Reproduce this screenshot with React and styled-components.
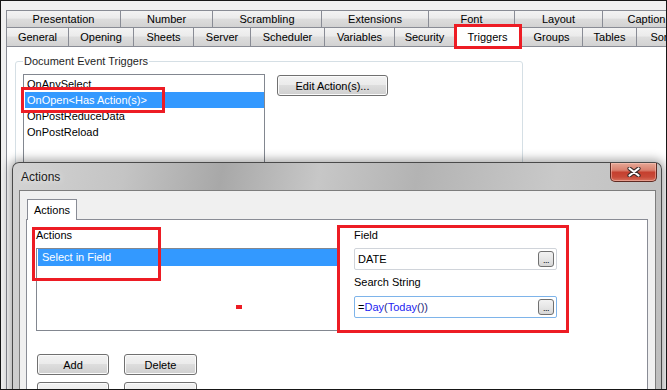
import React from "react";
import styled, { createGlobalStyle, css } from "styled-components";

const GlobalStyle = createGlobalStyle`
  html, body { margin: 0; padding: 0; background: #ffffff; }
  body {
    font-family: "Liberation Sans", Arial, sans-serif;
    font-size: 11px;
    color: #000;
  }
  * { box-sizing: border-box; }
`;

const Frame = styled.div`
  width: 667px;
  height: 390px;
  border: 1px solid #161616;
  overflow: hidden;
`;

const Canvas = styled.div`
  position: relative;
  width: 665px;
  height: 388px;
  background: #f0f0f0;
  padding-top: 9px;
  overflow: hidden;
`;

const TabStrip = styled.div`
  padding-left: 5px;
`;

const TabRow = styled.div`
  display: flex;
  align-items: flex-start;
  height: 18px;
`;

const Tab = styled.div`
  flex: 0 0 ${({ $w }) => $w}px;
  height: 18px;
  border: 1px solid #898c95;
  border-left-width: 0;
  ${({ $lower }) =>
    $lower &&
    css`
      border-top-width: 0;
      border-bottom-width: 0;
    `}
  &:first-child { border-left-width: 1px; }
  background: linear-gradient(#f3f3f3, #ebebeb 45%, #dddddd 50%, #d2d2d2);
  display: flex;
  align-items: center;
  justify-content: center;
  white-space: nowrap;
  overflow: hidden;
  position: relative;
  ${({ $active }) =>
    $active &&
    css`
      background: #ffffff;
      height: 21px;
      margin-top: -2px;
      border-top-width: 1px;
      border-left-width: 1px;
      margin-left: -1px;
      flex-basis: ${({ $w }) => $w + 1}px;
      z-index: 2;
    `}
`;

const Panel = styled.div`
  margin-left: 5px;
  width: 700px;
  height: 360px;
  background: #ffffff;
  border: 1px solid #898c95;
  padding-top: 8px;
`;

const GroupBox = styled.fieldset`
  margin: 0 0 0 8px;
  width: 508px;
  height: 300px;
  border: 1px solid #d5dfe5;
  border-radius: 3px;
  padding: 0 0 0 7px;
`;

const Legend = styled.legend`
  padding: 0 1px;
  line-height: 13px;
  color: #1e1e1e;
`;

const GroupBody = styled.div`
  display: flex;
  align-items: flex-start;
  padding-top: 6px;
`;

const ListBox = styled.div`
  flex-shrink: 0;
  width: ${({ $w }) => $w}px;
  height: ${({ $h }) => $h}px;
  margin-top: ${({ $mt }) => $mt || 0}px;
  border: 1px solid #828790;
  padding: ${({ $pt }) => $pt}px 0 0 1px;
  background: #fff;
`;

const ListItem = styled.div`
  height: ${({ $h }) => $h || 16}px;
  line-height: ${({ $h }) => $h || 16}px;
  padding-left: ${({ $pl }) => $pl || 2}px;
  white-space: nowrap;
  ${({ $selected }) =>
    $selected &&
    css`
      background: #3399ff;
      color: #ffffff;
    `}
`;

const Button = styled.div`
  width: ${({ $w }) => $w}px;
  height: 21px;
  border: 1px solid #707070;
  border-radius: 3px;
  background: linear-gradient(#f2f2f2, #ebebeb 45%, #dddddd 50%, #cfcfcf);
  box-shadow: inset 0 0 0 1px #fbfbfb;
  display: flex;
  align-items: center;
  justify-content: center;
  color: ${({ $disabled }) => ($disabled ? "#8d8d8d" : "#000")};
  flex: 0 0 auto;
`;

const EditButton = styled(Button)`
  margin: 1px 0 0 12px;
`;

const Dialog = styled.div`
  position: absolute;
  left: 11px;
  top: 161px;
  width: 650px;
  height: 300px;
  border: 1px solid #4a4a4a;
  border-bottom: none;
  border-radius: 7px 7px 0 0;
  background: linear-gradient(
    100deg,
    #d3d3d3 0%,
    #c4c4c4 16%,
    #a8a8a8 30%,
    #c7c7c7 44%,
    #b3b3b3 58%,
    #c9c9c9 78%,
    #bdbdbd 100%
  );
  box-shadow: 0 0 10px 3px rgba(0, 0, 0, 0.32);
  padding: 0 5px 0 6px;
  display: flex;
  flex-direction: column;
  z-index: 3;
`;

const TitleBar = styled.div`
  flex-shrink: 0;
  height: 27px;
  margin: 0 -5px 0 -6px;
  padding: 0 4px 0 8px;
  display: flex;
  align-items: flex-start;
`;

const Title = styled.div`
  padding-top: 7px;
  line-height: 14px;
  font-size: 12px;
  color: #1a1a1a;
  text-shadow: 0 0 6px rgba(255, 255, 255, 0.9);
`;

const CloseButton = styled.div`
  margin-left: auto;
  width: 47px;
  height: 19px;
  border: 1px solid #5e2a22;
  border-top: none;
  border-radius: 0 0 5px 5px;
  background: linear-gradient(#e6a896 0%, #d9806e 40%, #c5402f 52%, #c84a38 78%, #d8735f 100%);
  box-shadow: inset 0 0 0 1px rgba(255, 210, 200, 0.45);
  display: flex;
  align-items: center;
  justify-content: center;
`;

const Client = styled.div`
  flex: 1;
  border: 1px solid #7d7d7d;
  background: #f0f0f0;
  padding: 8px 7px 0 6px;
  display: flex;
  flex-direction: column;
`;

const PageTab = styled.div`
  flex-shrink: 0;
  width: 50px;
  height: 21px;
  margin: 0 0 -1px 1px;
  border: 1px solid #898c95;
  border-bottom: none;
  background: #ffffff;
  display: flex;
  align-items: center;
  justify-content: center;
  position: relative;
  z-index: 1;
`;

const PagePanel = styled.div`
  flex: 1;
  border: 1px solid #898c95;
  background: #ffffff;
  padding: 9px 0 0 9px;
  display: grid;
  grid-template-columns: 302px 203px;
  column-gap: 16px;
  align-items: start;
`;

const Column = styled.div`
  display: flex;
  flex-direction: column;
`;

const Label = styled.div`
  line-height: 13px;
  margin-top: ${({ $mt }) => $mt || 0}px;
`;

const ButtonRow = styled.div`
  display: flex;
  gap: 15px;
  margin: ${({ $mt }) => $mt}px 0 0 1px;
`;

const TextBox = styled.div`
  height: 22px;
  margin-top: ${({ $mt }) => $mt}px;
  border: 1px solid ${({ $focus }) => ($focus ? "#7eb4ea" : "#d0d4da")};
  border-radius: 2px;
  display: flex;
  align-items: center;
  padding: 0 2px 0 3px;
  background: #fff;
`;

const TextValue = styled.div`
  flex: 1;
  white-space: nowrap;
`;

const Fn = styled.span`
  color: #2424f2;
`;

const Paren = styled.span`
  color: #2a2a7c;
`;

const Ellipsis = styled.div`
  width: 16px;
  height: 16px;
  border: 1px solid #707070;
  border-radius: 3px;
  background: linear-gradient(#f2f2f2, #e6e6e6 50%, #d6d6d6);
  display: flex;
  align-items: flex-end;
  justify-content: center;
  font-size: 9px;
  line-height: 11px;
  letter-spacing: -0.5px;
`;

const Annotation = styled.div`
  position: absolute;
  left: ${({ $x }) => $x - 1}px;
  top: ${({ $y }) => $y - 1}px;
  width: ${({ $w }) => $w}px;
  height: ${({ $h }) => $h}px;
  border: 3px solid #ed1c24;
  z-index: 5;
`;

const Dot = styled.div`
  position: absolute;
  left: 235px;
  top: 304px;
  width: 6px;
  height: 4px;
  background: #ed1c24;
  z-index: 5;
`;

const upperTabs = [
  ["Presentation", 115],
  ["Number", 92],
  ["Scrambling", 109],
  ["Extensions", 107],
  ["Font", 86],
  ["Layout", 88],
  ["Caption", 88],
];

const lowerTabs = [
  ["General", 63],
  ["Opening", 65],
  ["Sheets", 60],
  ["Server", 57],
  ["Scheduler", 74],
  ["Variables", 70],
  ["Security", 60],
  ["Triggers", 66],
  ["Groups", 62],
  ["Tables", 54],
  ["Sort", 48],
];

const triggers = ["OnAnySelect", "OnOpen<Has Action(s)>", "OnPostReduceData", "OnPostReload"];

function CloseGlyph() {
  return (
    <svg width="14" height="10" viewBox="0 0 14 10">
      <path d="M2.5 1.5 L11.5 8.5 M11.5 1.5 L2.5 8.5" stroke="#3b2a28" strokeWidth="4.2" strokeLinecap="round" />
      <path d="M2.5 1.5 L11.5 8.5 M11.5 1.5 L2.5 8.5" stroke="#ffffff" strokeWidth="2.2" strokeLinecap="round" />
    </svg>
  );
}

export default function App() {
  return (
    <>
      <GlobalStyle />
      <Frame>
        <Canvas>
          <TabStrip>
            <TabRow>
              {upperTabs.map(([name, w]) => (
                <Tab key={name} $w={w}>
                  {name}
                </Tab>
              ))}
            </TabRow>
            <TabRow>
              {lowerTabs.map(([name, w]) => (
                <Tab key={name} $w={w} $lower $active={name === "Triggers"}>
                  {name}
                </Tab>
              ))}
            </TabRow>
          </TabStrip>
          <Panel>
            <GroupBox>
              <Legend>Document Event Triggers</Legend>
              <GroupBody>
                <ListBox $w={242} $h={200} $pt={1}>
                  {triggers.map((t, i) => (
                    <ListItem key={t} $selected={i === 1}>
                      {t}
                    </ListItem>
                  ))}
                </ListBox>
                <EditButton $w={111}>Edit Action(s)...</EditButton>
              </GroupBody>
            </GroupBox>
          </Panel>

          <Dialog>
            <TitleBar>
              <Title>Actions</Title>
              <CloseButton>
                <CloseGlyph />
              </CloseButton>
            </TitleBar>
            <Client>
              <PageTab>Actions</PageTab>
              <PagePanel>
                <Column>
                  <Label>Actions</Label>
                  <ListBox $w={302} $h={83} $pt={0} $mt={6}>
                    <ListItem $selected $h={17} $pl={4}>
                      Select in Field
                    </ListItem>
                  </ListBox>
                  <ButtonRow $mt={23}>
                    <Button $w={72}>Add</Button>
                    <Button $w={73}>Delete</Button>
                  </ButtonRow>
                  <ButtonRow $mt={7}>
                    <Button $w={72} $disabled>
                      Promote
                    </Button>
                    <Button $w={73} $disabled>
                      Demote
                    </Button>
                  </ButtonRow>
                </Column>
                <Column>
                  <Label>Field</Label>
                  <TextBox $mt={6}>
                    <TextValue>DATE</TextValue>
                    <Ellipsis>...</Ellipsis>
                  </TextBox>
                  <Label $mt={6}>Search String</Label>
                  <TextBox $mt={7} $focus>
                    <TextValue>
                      =<Fn>Day</Fn>
                      <Paren>(</Paren>
                      <Fn>Today</Fn>
                      <Paren>())</Paren>
                    </TextValue>
                    <Ellipsis>...</Ellipsis>
                  </TextBox>
                </Column>
              </PagePanel>
            </Client>
          </Dialog>

          <Annotation $x={454} $y={24} $w={68} $h={25} />
          <Annotation $x={21} $y={87} $w={144} $h={26} />
          <Annotation $x={32} $y={227} $w={129} $h={54} />
          <Annotation $x={337} $y={225} $w={232} $h={108} />
          <Dot />
        </Canvas>
      </Frame>
    </>
  );
}
